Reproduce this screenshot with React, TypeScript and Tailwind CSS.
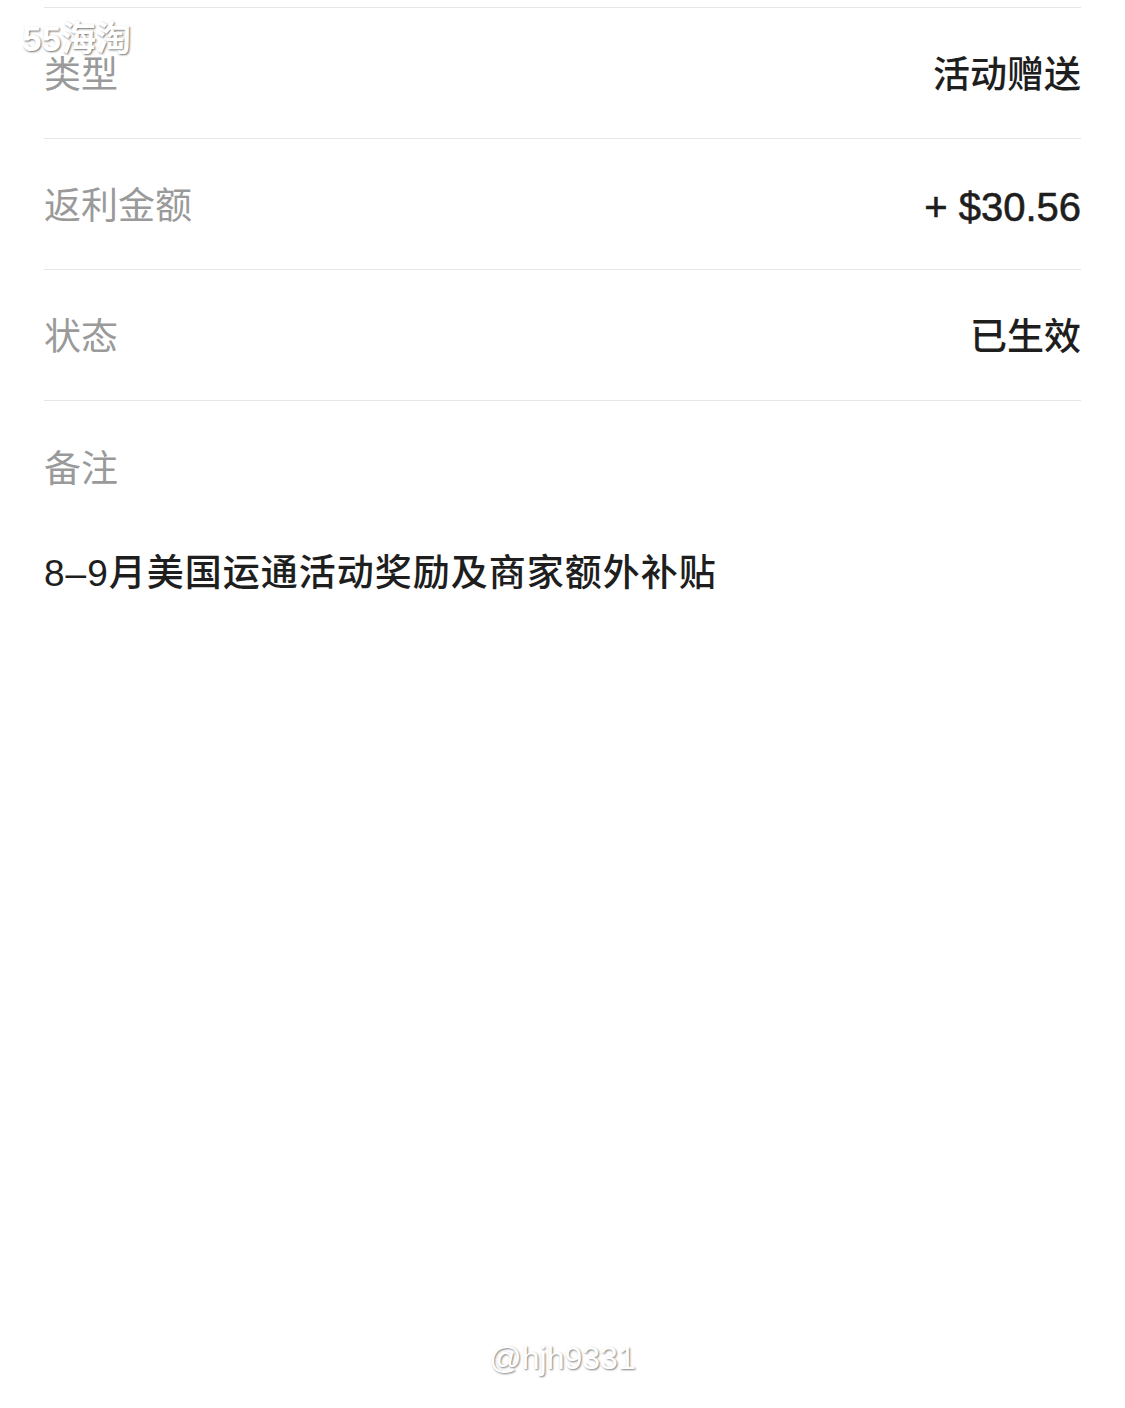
import React from "react";

const font = "font-['Liberation_Sans','Noto_Sans_CJK_SC',sans-serif]";

function Row({ label, value, amount }: { label: string; value: string; amount?: boolean }) {
  return (
    <div className="flex h-[131px] items-center justify-between border-b border-[#e6e6e6] pt-[5px]">
      <span className="text-[37px] leading-none text-[#9a9a9a]">{label}</span>
      <span
        className={
          amount
            ? "text-[40px] leading-none font-medium text-[#1e1e1e] [-webkit-text-stroke:0.6px_#1e1e1e]"
            : "text-[37px] leading-none font-medium text-[#1e1e1e]"
        }
      >
        {value}
      </span>
    </div>
  );
}

export default function App() {
  return (
    <div className={`relative w-[1125px] h-[1408px] bg-white overflow-hidden ${font}`}>
      <div className="pl-[44px] pr-[44px] pt-[7px]">
        <div className="border-b border-[#e6e6e6]" />
        <Row label="类型" value="活动赠送" />
        <Row label="返利金额" value="+ $30.56" amount />
        <Row label="状态" value="已生效" />
        <div className="flex h-[132px] items-center pt-[5px]">
          <span className="text-[37px] leading-none text-[#9a9a9a]">备注</span>
        </div>
        <div className="mt-[22px] text-[37px] leading-none font-medium text-[#1e1e1e] tracking-[1px]">
          8–9月美国运通活动奖励及商家额外补贴
        </div>
      </div>
      <div className="absolute left-[22px] top-[21px] text-[35px] leading-none font-bold text-white [text-shadow:1px_1px_2px_rgba(0,0,0,0.55)]">
        55海淘
      </div>
      <div className="absolute left-0 right-0 top-[1342px] text-center text-[32px] leading-none text-white [text-shadow:1px_1px_2px_rgba(0,0,0,0.5)]">
        @hjh9331
      </div>
    </div>
  );
}
